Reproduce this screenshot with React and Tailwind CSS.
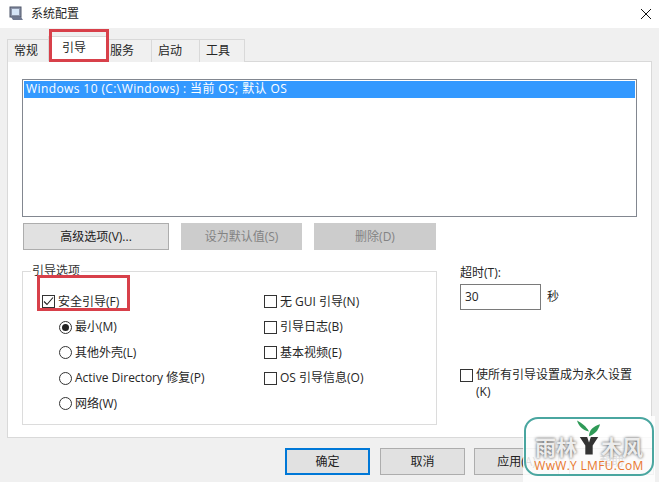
const font = { fontFamily: '"Open Sans", "Noto Sans CJK SC", sans-serif' }

function CheckBox({ checked }) {
  return (
    <span className="w-[13px] h-[13px] border border-[#333333] bg-white shrink-0 flex items-center justify-center">
      {checked && (
        <svg width="11" height="11" viewBox="0 0 11 11" fill="none" stroke="#222222" strokeWidth="1.1">
          <path d="M1 5.5 L4 8.5 L10 1.5" />
        </svg>
      )}
    </span>
  )
}

function Radio({ checked }) {
  return (
    <span className="w-[13px] h-[13px] rounded-full border border-[#333333] bg-white shrink-0 flex items-center justify-center">
      {checked && <span className="w-[7px] h-[7px] rounded-full bg-[#222222]" />}
    </span>
  )
}

function Option({ control, label, indent }) {
  return (
    <div className={`h-[25.5px] flex items-center gap-[3px] ${indent ? 'pl-[17px]' : ''}`}>
      {control}
      <span>{label}</span>
    </div>
  )
}

function Btn({ label, className = '', disabled }) {
  return (
    <div className={`h-[27px] flex items-center justify-center border ${disabled ? 'bg-[#cccccc] border-[#cccccc] text-[#838383]' : 'bg-[#e1e1e1] border-[#adadad] text-[#222222]'} ${className}`}>
      {label}
    </div>
  )
}

const tabs = [
  { label: '常规', cls: 'w-[42px] pl-[6px]' },
  { label: '引导', cls: 'w-[60px] pl-[13px]', active: true },
  { label: '服务', cls: 'w-[45px] pl-[2px]' },
  { label: '启动', cls: 'w-[49px] pl-[6px]' },
  { label: '工具', cls: 'w-[46px] pl-[6px]' },
]

export default function App() {
  return (
    <div style={font} className="relative w-[659px] h-[482px] overflow-hidden bg-[#f0f0f0] text-[12px] leading-[16px] text-[#262626]">
      <div className="h-[28px] bg-white flex items-center justify-between pl-[8px] pr-[8px]">
        <div className="flex items-center gap-[7px]">
          <svg width="16" height="16" viewBox="0 0 16 16">
            <rect x="2" y="1" width="11" height="10" fill="#8b93a8" stroke="#4d5468" />
            <rect x="4" y="3" width="7" height="6" fill="#d5e4f6" />
            <path d="M3 11 L13 11 L15 14 L5 14 Z" fill="#6f7890" />
          </svg>
          <span>系统配置</span>
        </div>
        <svg width="12" height="12" viewBox="0 0 12 12" stroke="#111111" fill="none" className="mr-[-1px]">
          <path d="M1 1 L11 11 M11 1 L1 11" />
        </svg>
      </div>

      <div className="h-[34px] pl-[7px] flex items-end">
        {tabs.map(t => (
          <div
            key={t.label}
            className={`flex items-center border border-[#d9d9d9] -mr-px ${t.cls} ${t.active ? 'bg-white border-b-white relative z-10 h-[26px] pb-[3px]' : 'h-[23px] bg-[#f0f0f0] border-b-0'}`}
          >
            {t.label}
          </div>
        ))}
      </div>

      <div className="ml-[7px] w-[645px] h-[377px] -mt-px bg-white border border-[#d9d9d9] pt-[17px] pl-[14px]">
        <div className="w-[615px] h-[138px] border border-[#828790] p-px">
          <div className="h-[17px] bg-[#3399ff] text-white pl-[2px] pb-[2px] flex items-center tracking-[0.4px]">Windows 10 (C:\Windows) : 当前 OS; 默认 OS</div>
        </div>

        <div className="mt-[6px] ml-px flex gap-[12px]">
          <Btn label="高级选项(V)..." className="w-[146px]" />
          <Btn label="设为默认值(S)" className="w-[121px]" disabled />
          <Btn label="删除(D)" className="w-[122px]" disabled />
        </div>

        <div className="flex mt-[13px]">
          <fieldset className="w-[415px] h-[162px] border border-[#dcdcdc] pl-[19px] flex">
            <legend className="-ml-[11px] px-[1px] text-[#333333]">引导选项</legend>
            <div className="flex w-[222px] pt-[10px] h-full">
              <div className="w-full">
                <Option control={<CheckBox checked />} label="安全引导(F)" />
                <Option indent control={<Radio checked />} label="最小(M)" />
                <Option indent control={<Radio />} label="其他外壳(L)" />
                <Option indent control={<Radio />} label="Active Directory 修复(P)" />
                <Option indent control={<Radio />} label="网络(W)" />
              </div>
            </div>
            <div className="pt-[10px]">
              <Option control={<CheckBox />} label="无 GUI 引导(N)" />
              <Option control={<CheckBox />} label="引导日志(B)" />
              <Option control={<CheckBox />} label="基本视频(E)" />
              <Option control={<CheckBox />} label="OS 引导信息(O)" />
            </div>
          </fieldset>

          <div className="ml-[23px] w-[175px]">
            <div className="mt-[-7px] pt-[9px]">超时(T):</div>
            <div className="flex items-center gap-[6px] mt-[3px]">
              <div className="w-[81px] h-[26px] border border-[#7a7a7a] pl-[4px] flex items-center bg-white">30</div>
              <span>秒</span>
            </div>
            <div className="mt-[56px] flex gap-[3px] items-start">
              <span className="mt-[3px]"><CheckBox /></span>
              <span className="w-[160px] leading-[17px] break-all">使所有引导设置成为永久设置(K)</span>
            </div>
          </div>
        </div>
      </div>

      <div className="pl-[285px] pt-[10px] flex gap-[10px]">
        <Btn label="确定" className="w-[85px] border-2 border-[#0078d7]!" />
        <Btn label="取消" className="w-[85px]" />
        <Btn label="应用(A)" className="w-[85px] ml-[-1px]" />
        <Btn label="帮助" className="w-[85px]" />
      </div>

      {/* red annotation boxes */}
      <div className="absolute left-[49px] top-[29px] w-[60px] h-[33px] border-[3px] border-[#d8404a] pointer-events-none z-20" />
      <div className="absolute left-[37px] top-[275px] w-[93px] h-[36px] border-[3px] border-[#d8404a] pointer-events-none z-20" />

      {/* watermark */}
      <div className="absolute left-[523px] top-[416px] w-[132px] h-[66px] bg-white/85 z-30 p-px">
        <div className="w-[130px] h-[59px] border-2 border-[#4aa6a0] rounded-[14px] flex flex-col items-center justify-end pb-px">
          <div className="flex items-end text-[#ececec] font-bold text-[21px] leading-[24px]">
            <span style={{ textShadow: '0 0 3px #444444' }}>雨林</span>
            <svg width="24" height="38" viewBox="0 0 26 38" className="-mt-[14px] mb-[2px]">
              <path d="M13 17 C13 10 18 6 25 4 C23 11 19 15 13 17 Z" fill="#2f9a57" />
              <path d="M13 12 C10 6 5 3 0 0 C2 7 7 11 13 12 Z" fill="#2f9a57" />
              <path d="M3 18 H11 L13 24 L15 18 H23 L17 27 V37 H9 V27 Z" fill="#333333" />
            </svg>
            <span style={{ textShadow: '0 0 3px #444444' }}>木风</span>
          </div>
          <div className="text-[#e8772e] text-[12px] leading-[14px] tracking-[0.3px]">WwW.Y LMFU.CoM</div>
        </div>
      </div>
    </div>
  )
}
